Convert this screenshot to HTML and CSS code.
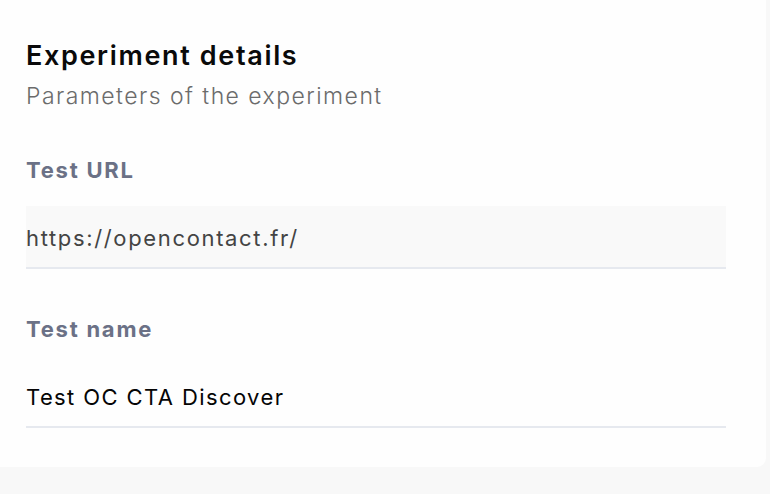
FILE: index.html
```html
<!DOCTYPE html>
<html lang="en">
<head>
<meta charset="utf-8">
<title>Experiment details</title>
<link rel="stylesheet" href="styles.css">
</head>
<body>
<section class="card">
  <header class="card-head">
    <h2 class="title">Experiment details</h2>
    <p class="subtitle">Parameters of the experiment</p>
  </header>
  <div class="field">
    <label class="label" for="url">Test URL</label>
    <input class="input input-filled" id="url" type="text" value="https://opencontact.fr/" readonly>
  </div>
  <div class="field">
    <label class="label" for="name">Test name</label>
    <input class="input input-plain" id="name" type="text" value="Test OC CTA Discover" readonly>
  </div>
</section>
</body>
</html>
```

FILE: styles.css
```css
* { box-sizing: border-box; }
html, body { margin: 0; padding: 0; }
body {
  background: #f8f8f8;
  font-family: "Inter", "Open Sans", sans-serif;
  width: 770px;
  height: 494px;
  overflow: hidden;
}
.card {
  width: 766px;
  height: 467px;
  background: #fefefe;
  border-bottom-right-radius: 9px;
  padding: 38px 40px 0 26px;
}
.card-head { display: flex; flex-direction: column; }
.title {
  margin: 0;
  font-size: 27px;
  line-height: 36px;
  font-weight: 600;
  letter-spacing: 1.65px;
  color: #0a0a0a;
}
.subtitle {
  margin: 4px 0 0;
  font-size: 23px;
  line-height: 36px;
  font-weight: 300;
  letter-spacing: 1.45px;
  color: #6b6b6b;
}
.field { display: flex; flex-direction: column; }
.card-head + .field { margin-top: 41px; }
.field + .field { margin-top: 45px; }
.label {
  font-size: 22px;
  line-height: 30px;
  font-weight: 700;
  letter-spacing: 1.75px;
  color: #6b7186;
}
.input {
  margin-top: 21px;
  width: 700px;
  height: 63px;
  border: 0;
  border-bottom: 2px solid #e6e9ef;
  padding: 3px 0 0;
  font-family: inherit;
  font-size: 22px;
  letter-spacing: 1.65px;
  outline: none;
}
.input-filled { background: #f9f9f9; color: #444444; }
.input-plain { background: transparent; color: #050505; letter-spacing: 1.4px; }
```
